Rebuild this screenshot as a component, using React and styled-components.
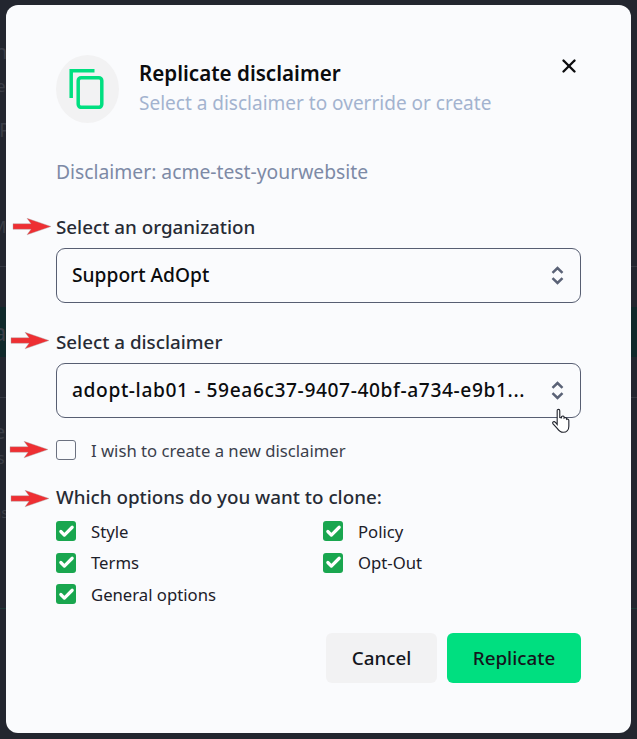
import React from 'react';
import styled, { createGlobalStyle } from 'styled-components';
import { Check, X } from 'lucide-react';

const GlobalStyle = createGlobalStyle`
  html, body {
    margin: 0;
    height: 100%;
    background: #23262f;
    overflow: hidden;
  }
  body {
    font-family: "Noto Sans", "Open Sans", sans-serif;
  }
`;

const Backdrop = styled.div`
  position: relative;
  width: 637px;
  height: 739px;
  box-sizing: border-box;
  padding: 5px 6px 6px 6px;
  background: #23262f;
  overflow: hidden;
`;

/* page behind the dimmed overlay, only its edges peek out */
const GhostText = styled.span`
  position: absolute;
  left: ${(p) => p.$left}px;
  top: ${(p) => p.$top}px;
  font-size: ${(p) => p.$size}px;
  line-height: 1;
  color: #3b3e47;
`;

const GhostLine = styled.div`
  position: absolute;
  left: 0;
  right: 0;
  top: ${(p) => p.$top}px;
  height: 1px;
  background: ${(p) => p.$color || '#363943'};
`;

const GhostBand = styled.div`
  position: absolute;
  left: 0;
  right: 0;
  top: 307px;
  height: 50px;
  background: #10292b;
`;

const Modal = styled.div`
  position: relative;
  height: 100%;
  box-sizing: border-box;
  padding: 50px 50px 0 50px;
  background: #fafbfd;
  border-radius: 12px;
  display: flex;
  flex-direction: column;
`;

const Header = styled.header`
  display: flex;
  align-items: center;
  gap: 20px;
  height: 68px;
`;

const IconCircle = styled.div`
  width: 63px;
  height: 68px;
  border-radius: 50%;
  background: #f2f2f3;
  display: flex;
  align-items: center;
  justify-content: center;
  flex-shrink: 0;
`;

const Titles = styled.div`
  display: flex;
  flex-direction: column;
  gap: 4px;
  margin-top: -3px;
`;

const Title = styled.h2`
  margin: 0;
  font-size: 20.6px;
  line-height: 27px;
  font-weight: 600;
  color: #0b0c0e;
`;

const Subtitle = styled.p`
  margin: 0;
  font-size: 19px;
  line-height: 24px;
  color: #a3b3cf;
`;

const CloseButton = styled.button`
  position: absolute;
  top: 50px;
  right: 51px;
  padding: 0;
  border: 0;
  background: none;
  color: #0b0c0e;
  display: flex;
`;

const Source = styled.p`
  margin: 37px 0 0;
  font-size: 19.3px;
  line-height: 24px;
  color: #7d8aa6;
`;

const FieldLabel = styled.label`
  display: block;
  margin-top: ${(p) => p.$top}px;
  font-size: 18.8px;
  line-height: 24px;
  font-weight: 500;
  color: #272b35;
`;

const Select = styled.div`
  margin-top: 9px;
  height: 55px;
  box-sizing: border-box;
  padding: 0 16px 0 15px;
  border: 1px solid #575e72;
  border-radius: 9px;
  display: flex;
  align-items: center;
  justify-content: space-between;
  gap: 16px;
`;

const SelectValue = styled.span`
  flex: 1;
  min-width: 0;
  margin-bottom: 2px;
  white-space: nowrap;
  font-size: 19.2px;
  line-height: 24px;
  font-weight: 500;
  letter-spacing: ${(p) => p.$spacing || 0}px;
  color: #0b0c0e;
`;

const CheckRow = styled.div`
  display: flex;
  align-items: center;
  gap: 15px;
`;

const NewDisclaimer = styled(CheckRow)`
  margin-top: 16px;
  height: 32px;
`;

const Box = styled.span`
  width: 20px;
  height: 20px;
  box-sizing: border-box;
  border-radius: 3px;
  display: flex;
  align-items: center;
  justify-content: center;
  flex-shrink: 0;
  color: #fff;
  background: ${(p) => (p.$checked ? '#19a64f' : 'transparent')};
  border: ${(p) => (p.$checked ? 'none' : '1px solid #6b7180')};
`;

const CheckText = styled.span`
  font-size: 16.7px;
  color: ${(p) => p.$color || '#1c2029'};
`;

const OptionsGrid = styled.div`
  margin-top: 6.5px;
  display: grid;
  grid-template-columns: 267px 1fr;
  grid-auto-rows: 31.5px;
`;

const Footer = styled.footer`
  margin-top: 23px;
  display: flex;
  justify-content: flex-end;
  gap: 10px;
`;

const Button = styled.button`
  height: 50px;
  width: ${(p) => p.$width}px;
  border: 0;
  border-radius: 6px;
  font-family: inherit;
  font-size: 18.8px;
  font-weight: 500;
  color: #14161c;
  background: ${(p) => (p.$primary ? '#00df80' : '#f2f2f3')};
`;

const Arrow = styled.svg`
  position: absolute;
  left: ${(p) => p.$left}px;
  top: ${(p) => p.$top}px;
`;

const Cursor = styled.svg`
  position: absolute;
  left: 552px;
  top: 408px;
`;

const RedArrow = ({ left, top }) => (
  <Arrow $left={left} $top={top} width="41" height="18" viewBox="0 0 41 18">
    <path d="M1 5.700H19L15 .3 39 8.500 15 16.800l4-5.500H1z" fill="#ee2f33" stroke="#a8a8a8" strokeWidth="0.4" />
  </Arrow>
);

const CopyIcon = () => (
  <svg width="37" height="40" viewBox="0 0 37 40" fill="none" stroke="#00df80" strokeWidth="3.500">
    <path d="M2.200 29V1.700h23.300" />
    <rect x="9.200" y="8.700" width="23.600" height="29.600" rx="3" />
  </svg>
);

const UpDownIcon = () => (
  <svg width="13" height="19" viewBox="0 0 13 19" fill="none" stroke="#5a6276" strokeWidth="2.500">
    <path d="M1.500 6.800 6.500 2l5 4.800" />
    <path d="M1.500 12.200 6.500 17l5-4.800" />
  </svg>
);

const options = [
  { label: 'Style' },
  { label: 'Policy' },
  { label: 'Terms' },
  { label: 'Opt-Out' },
  { label: 'General options' },
];

const Option = ({ label }) => (
  <CheckRow>
    <Box $checked>
      <Check size={17} strokeWidth={4.5} />
    </Box>
    <CheckText>{label}</CheckText>
  </CheckRow>
);

export default function App() {
  return (
    <Backdrop>
      <GlobalStyle />
      <GhostBand />
      <GhostLine $top={266} />
      <GhostLine $top={397} />
      <GhostLine $top={608} $color="#1f3a38" />
      <GhostText $left={-5} $top={42} $size={20}>n</GhostText>
      <GhostText $left={-4} $top={77} $size={17}>e</GhostText>
      <GhostText $left={-1} $top={120} $size={20}>P</GhostText>
      <GhostText $left={-9} $top={218} $size={17}>M</GhostText>
      <GhostText $left={-7} $top={320} $size={24}>a</GhostText>
      <GhostText $left={-6} $top={422} $size={20}>e</GhostText>
      <GhostText $left={-3} $top={450} $size={16}>s</GhostText>
      <GhostText $left={-8} $top={505} $size={15}>ns</GhostText>

      <Modal>
        <Header>
          <IconCircle>
            <CopyIcon />
          </IconCircle>
          <Titles>
            <Title>Replicate disclaimer</Title>
            <Subtitle>Select a disclaimer to override or create</Subtitle>
          </Titles>
        </Header>
        <CloseButton aria-label="Close">
          <X size={22} strokeWidth={2.6} />
        </CloseButton>
        <Source>Disclaimer: acme-test-yourwebsite</Source>

        <FieldLabel $top={31}>Select an organization</FieldLabel>
        <Select>
          <SelectValue>Support AdOpt</SelectValue>
          <UpDownIcon />
        </Select>

        <FieldLabel $top={27}>Select a disclaimer</FieldLabel>
        <Select>
          <SelectValue $spacing={0.6}>adopt-lab01 - 59ea6c37-9407-40bf-a734-e9b1...</SelectValue>
          <UpDownIcon />
        </Select>

        <NewDisclaimer>
          <Box />
          <CheckText $color="#3a3f4c">I wish to create a new disclaimer</CheckText>
        </NewDisclaimer>

        <FieldLabel $top={19}>Which options do you want to clone:</FieldLabel>
        <OptionsGrid>
          {options.map((o) => (
            <Option key={o.label} label={o.label} />
          ))}
        </OptionsGrid>

        <Footer>
          <Button $width={111}>Cancel</Button>
          <Button $primary $width={134}>Replicate</Button>
        </Footer>
      </Modal>

      <RedArrow left={12} top={218} />
      <RedArrow left={10} top={332} />
      <RedArrow left={9} top={441} />
      <RedArrow left={10} top={490} />

      <Cursor width="19" height="26" viewBox="0 0 22 28">
        <path
          d="M6 2c0-2 3-2 3 0v8l2 .3V9c1-1 2.500-1 3 0v1.500c1-.8 2.500-.6 3 .5v1c1-.5 2.500 0 2.500 1.500V20c0 4-2.500 7-6.500 7-3.500 0-5-1.500-7-4.500L1 17c-1-2 1.500-3 3-1.500L6 18z"
          fill="#fff"
          stroke="#22252e"
          strokeWidth="1.300"
        />
      </Cursor>
    </Backdrop>
  );
}
